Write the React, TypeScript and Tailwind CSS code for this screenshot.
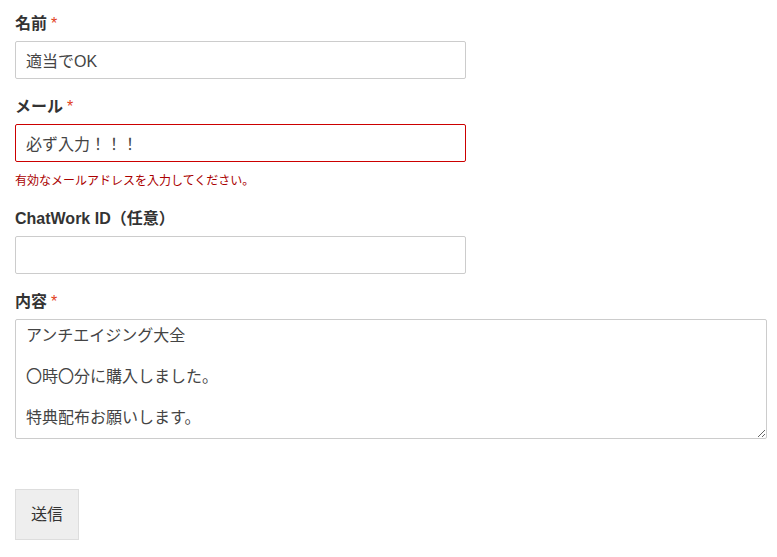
import React from "react";

const font = { fontFamily: '"Liberation Sans", "Noto Sans CJK JP", sans-serif' };

const Label = ({ text, required }: { text: string; required?: boolean }) => (
  <label className="block h-6 leading-6 mb-[5px] text-[16px] font-bold text-[#333]">
    {text}
    {required && <span className="ml-1 font-normal text-[#e2401c]">*</span>}
  </label>
);

export default function App() {
  return (
    <div style={font} className="bg-white w-[777px] h-[557px] pl-[15px] pt-3 text-[#333]">
      <div className="mb-4">
        <Label text="名前" required />
        <input
          defaultValue="適当でOK"
          className="block w-[451px] h-[38px] px-[10px] border border-[#ccc] rounded-[2px] text-[16px] text-[#444] outline-none"
          style={font}
        />
      </div>

      <div className="mb-4">
        <Label text="メール" required />
        <input
          defaultValue="必ず入力！！！"
          className="block w-[451px] h-[38px] px-[10px] border border-[#c00] rounded-[2px] text-[16px] text-[#444] outline-none"
          style={font}
        />
        <p className="mt-[10px] h-[19px] text-[12px] leading-[19px] text-[#a00]">
          有効なメールアドレスを入力してください。
        </p>
      </div>

      <div className="mb-4">
        <Label text="ChatWork ID（任意）" />
        <input
          className="block w-[451px] h-[38px] px-[10px] border border-[#ccc] rounded-[2px] text-[16px] text-[#444] outline-none"
          style={font}
        />
      </div>

      <div>
        <Label text="内容" required />
        <textarea
          defaultValue={"アンチエイジング大全\n\n〇時〇分に購入しました。\n\n特典配布お願いします。"}
          className="block w-[752px] h-[120px] px-[10px] pt-[6px] border border-[#ccc] rounded-[2px] text-[16px] leading-[20.5px] text-[#444] outline-none"
          style={font}
        />
      </div>

      <button
        className="mt-[50px] w-16 h-[51px] bg-[#eee] border border-[#ddd] text-[16px] text-[#333]"
        style={font}
      >
        送信
      </button>
    </div>
  );
}
